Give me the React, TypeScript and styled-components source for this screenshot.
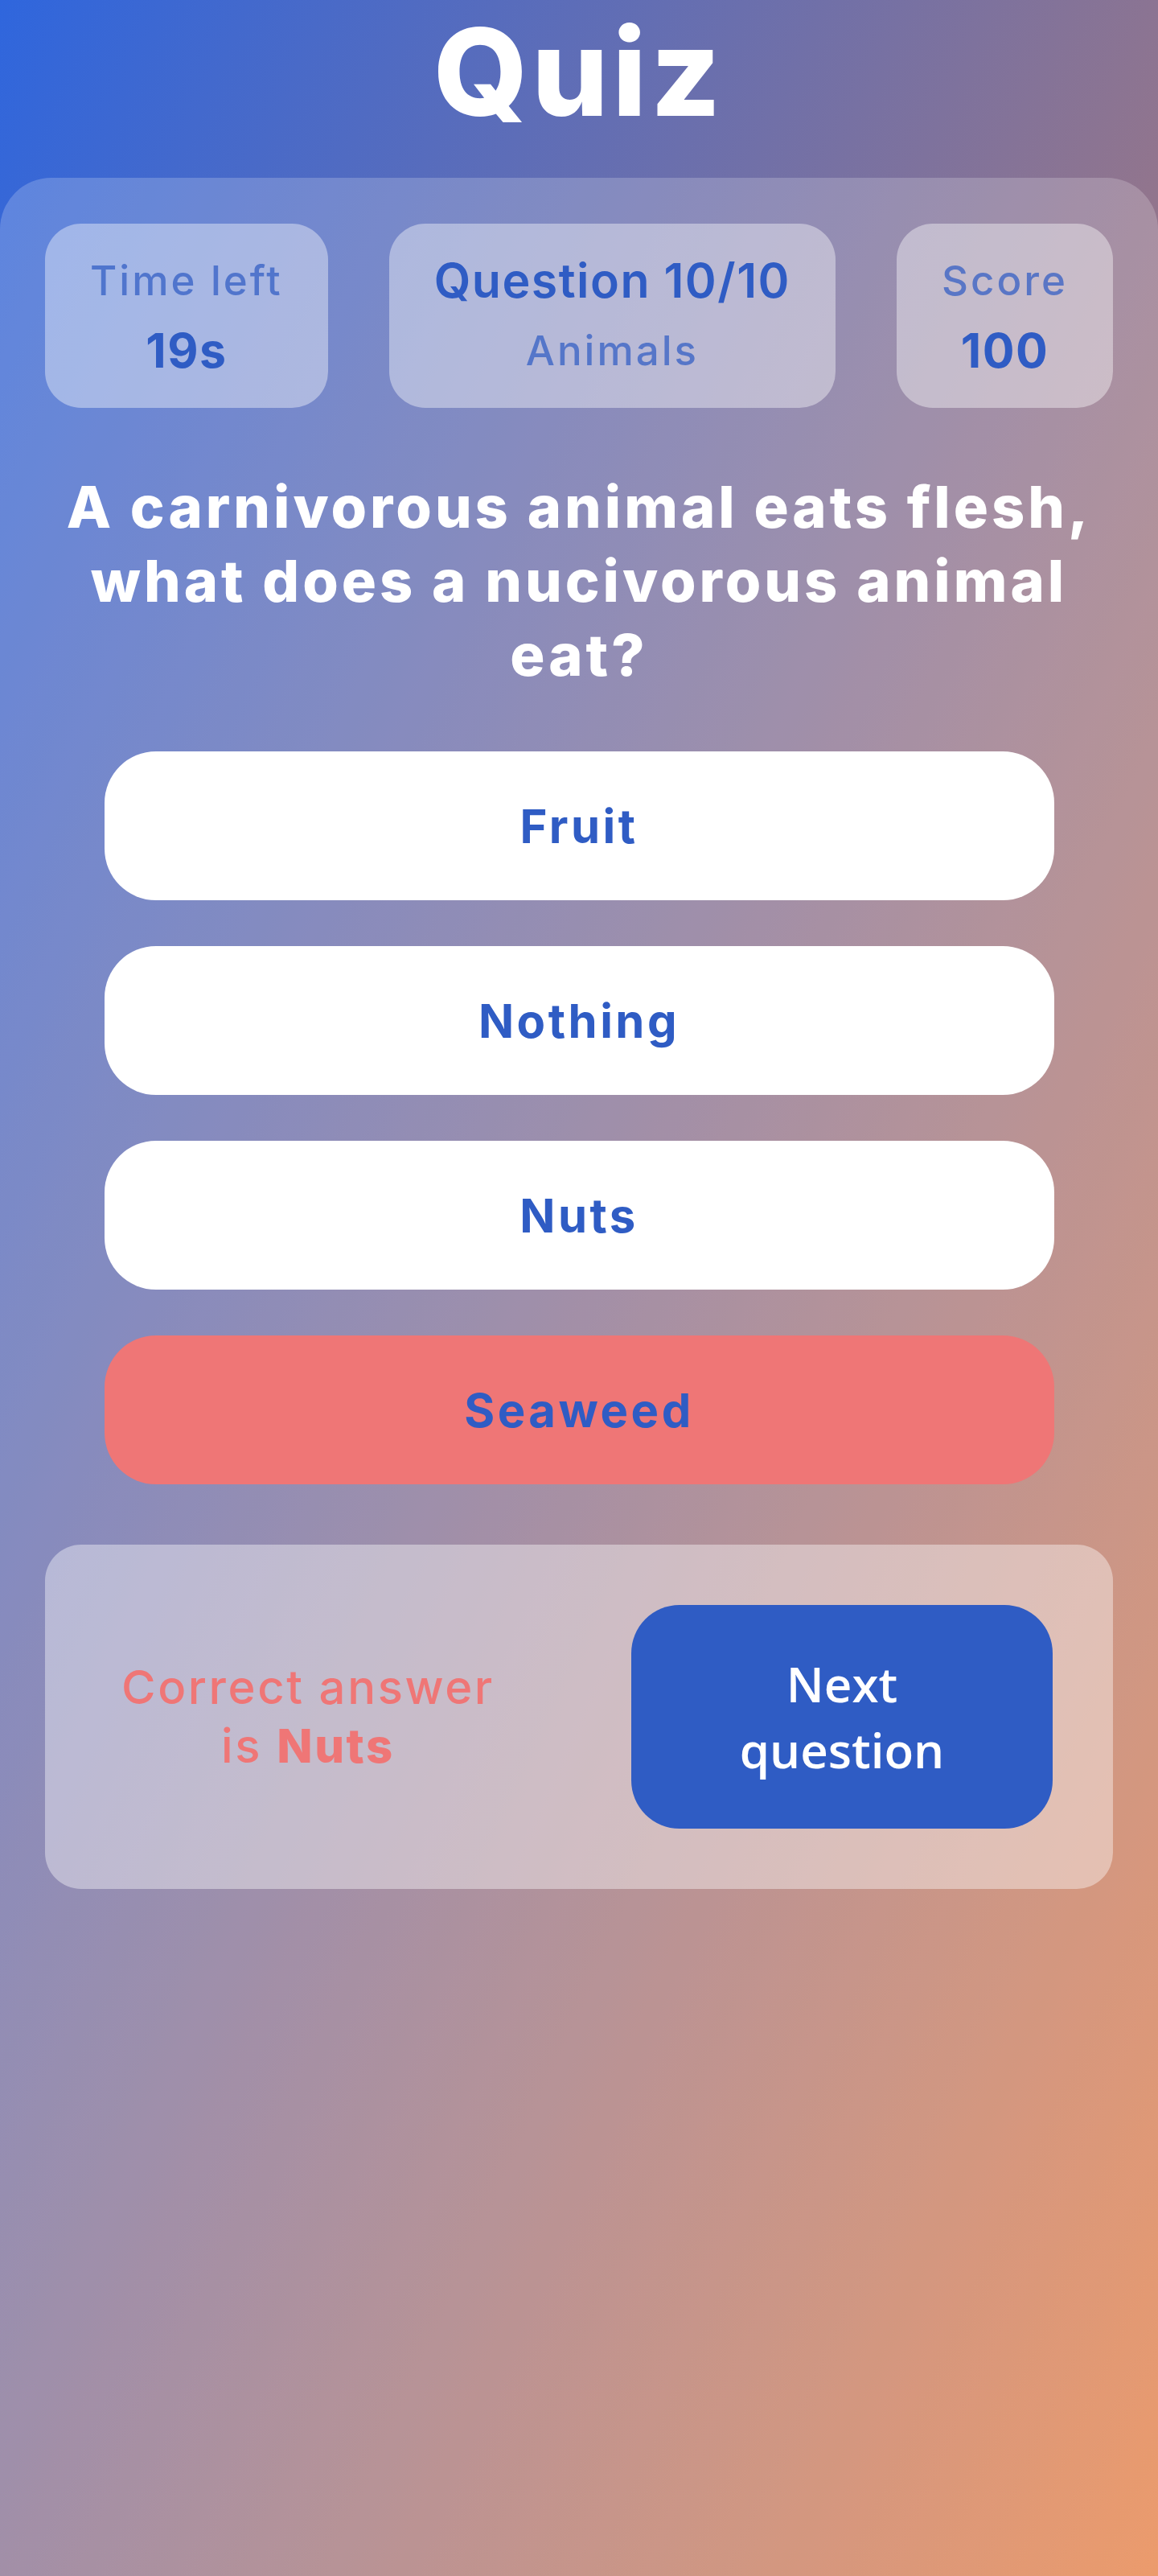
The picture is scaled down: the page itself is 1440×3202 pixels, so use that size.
import React from "react";
import styled, { createGlobalStyle } from "styled-components";

const GlobalStyle = createGlobalStyle`
  html, body {
    margin: 0;
    padding: 0;
    min-height: 100%;
  }
  body {
    font-family: Inter, "Noto Sans", sans-serif;
  }
  * { box-sizing: border-box; }
`;

const BLUE = "#2f5cc4";
const CORAL = "#ef7676";

const Page = styled.div`
  min-height: 100vh;
  display: flex;
  flex-direction: column;
  background: linear-gradient(to bottom right, #2f66dd, #e78248);
`;

const Header = styled.header`
  padding-top: 15px;
  margin-bottom: 56px;
  text-align: center;
`;

const Title = styled.h1`
  margin: 0;
  font-family: Inter, sans-serif;
  font-weight: 800;
  font-size: 150px;
  line-height: 150px;
  color: #ffffff;
  letter-spacing: 5px;
`;

const Panel = styled.main`
  flex: 1;
  background: rgba(255, 255, 255, 0.2);
  border-radius: 64px 64px 0 0;
  padding: 57px 56px 80px;
  display: flex;
  flex-direction: column;
`;

const StatsRow = styled.section`
  display: flex;
  justify-content: space-between;
`;

const StatCard = styled.div`
  height: 229px;
  padding: 0 56px;
  border-radius: 45px;
  background: rgba(255, 255, 255, 0.4);
  display: flex;
  flex-direction: column;
  justify-content: center;
  align-items: center;
  gap: 15px;
`;

const StatLabel = styled.span`
  font-family: Inter, sans-serif;
  font-size: 51px;
  line-height: 72px;
  font-weight: 500;
  letter-spacing: 3px;
  color: rgba(47, 92, 196, 0.72);
  white-space: nowrap;
`;

const StatValue = styled.span<{ $weight?: number }>`
  font-family: Inter, sans-serif;
  font-size: 59px;
  line-height: 72px;
  font-weight: ${(p) => p.$weight ?? 700};
  letter-spacing: 1.5px;
  color: ${BLUE};
  white-space: nowrap;
`;

const Question = styled.h2`
  margin: 77px auto 0;
  width: 1300px;
  max-width: 100%;
  text-align: center;
  font-family: Inter, sans-serif;
  font-weight: 800;
  font-size: 72px;
  line-height: 92px;
  letter-spacing: 4px;
  color: #ffffff;
`;

const Answers = styled.div`
  margin: 74px auto 0;
  width: 1181px;
  max-width: 100%;
  display: flex;
  flex-direction: column;
  gap: 57px;
`;

const AnswerButton = styled.button<{ $wrong?: boolean }>`
  height: 185px;
  border: none;
  border-radius: 64px;
  background: ${(p) => (p.$wrong ? CORAL : "#ffffff")};
  color: ${BLUE};
  font-family: Inter, sans-serif;
  font-weight: 700;
  font-size: 58px;
  line-height: 72px;
  letter-spacing: 3.5px;
  display: flex;
  align-items: center;
  justify-content: center;
  cursor: pointer;
`;

const ResultCard = styled.section`
  margin-top: 75px;
  padding: 75px 75px 75px 95px;
  border-radius: 45px;
  background: rgba(255, 255, 255, 0.4);
  display: flex;
  align-items: center;
  justify-content: space-between;
`;

const ResultText = styled.p`
  margin: 0;
  text-align: center;
  font-family: Inter, sans-serif;
  font-size: 58px;
  line-height: 73px;
  font-weight: 500;
  letter-spacing: 2.6px;
  color: ${CORAL};
  strong {
    font-weight: 800;
  }
`;

const NextButton = styled.button`
  width: 524px;
  height: 278px;
  border: none;
  border-radius: 60px;
  background: ${BLUE};
  color: #ffffff;
  font-family: "Open Sans", sans-serif;
  font-weight: 600;
  font-size: 60px;
  line-height: 82px;
  padding: 0 80px;
  cursor: pointer;
`;

const answers = [
  { text: "Fruit", wrong: false },
  { text: "Nothing", wrong: false },
  { text: "Nuts", wrong: false },
  { text: "Seaweed", wrong: true },
];

export default function App() {
  return (
    <>
      <GlobalStyle />
      <Page>
        <Header>
          <Title>Quiz</Title>
        </Header>
        <Panel>
          <StatsRow>
            <StatCard>
              <StatLabel>Time left</StatLabel>
              <StatValue>19s</StatValue>
            </StatCard>
            <StatCard>
              <StatValue $weight={600}>Question 10/10</StatValue>
              <StatLabel>Animals</StatLabel>
            </StatCard>
            <StatCard>
              <StatLabel>Score</StatLabel>
              <StatValue>100</StatValue>
            </StatCard>
          </StatsRow>
          <Question>A carnivorous animal eats flesh, what does a nucivorous animal eat?</Question>
          <Answers>
            {answers.map((a) => (
              <AnswerButton key={a.text} $wrong={a.wrong}>
                {a.text}
              </AnswerButton>
            ))}
          </Answers>
          <ResultCard>
            <ResultText>
              Correct answer
              <br />
              is <strong>Nuts</strong>
            </ResultText>
            <NextButton>Next question</NextButton>
          </ResultCard>
        </Panel>
      </Page>
    </>
  );
}
